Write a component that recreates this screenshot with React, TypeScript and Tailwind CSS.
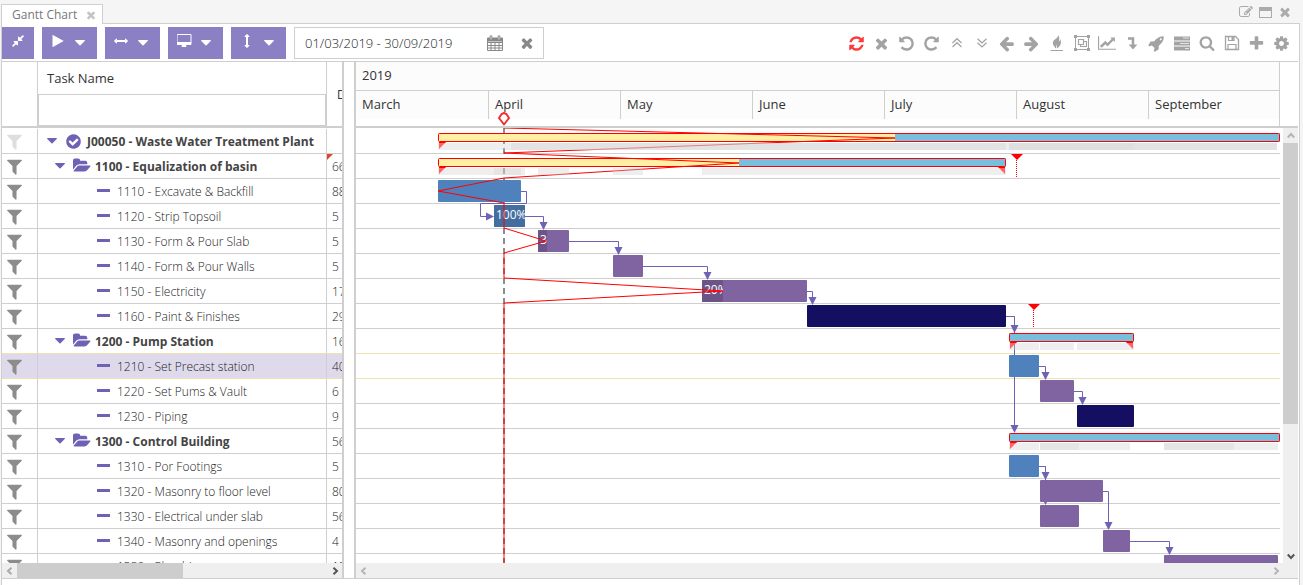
import type { ReactNode } from "react";

type Level = "project" | "group" | "task";

interface Task {
  id: string;
  name: string;
  level: Level;
  duration: string;
  selected?: boolean;
  flagged?: boolean;
}

interface Bar {
  row: number;
  from: number;
  to: number;
  fill: string;
  done?: number;
  doneFill?: string;
  label?: string;
}

interface Summary {
  row: number;
  from: number;
  to: number;
  done?: number;
  open?: boolean;
}

interface Link {
  row: number;
  from: number;
  x: number;
  target: number;
  summary?: boolean;
}

const TASKS: Task[] = [
  { id: "J00050", name: "Waste Water Treatment Plant", level: "project", duration: "" },
  { id: "1100", name: "Equalization of basin", level: "group", duration: "66", flagged: true },
  { id: "1110", name: "Excavate & Backfill", level: "task", duration: "88" },
  { id: "1120", name: "Strip Topsoil", level: "task", duration: "5" },
  { id: "1130", name: "Form & Pour Slab", level: "task", duration: "5" },
  { id: "1140", name: "Form & Pour Walls", level: "task", duration: "5" },
  { id: "1150", name: "Electricity", level: "task", duration: "17" },
  { id: "1160", name: "Paint & Finishes", level: "task", duration: "29" },
  { id: "1200", name: "Pump Station", level: "group", duration: "16" },
  { id: "1210", name: "Set Precast station", level: "task", duration: "40", selected: true },
  { id: "1220", name: "Set Pums & Vault", level: "task", duration: "6" },
  { id: "1230", name: "Piping", level: "task", duration: "9" },
  { id: "1300", name: "Control Building", level: "group", duration: "56" },
  { id: "1310", name: "Por Footings", level: "task", duration: "5" },
  { id: "1320", name: "Masonry to floor level", level: "task", duration: "80" },
  { id: "1330", name: "Electrical under slab", level: "task", duration: "56" },
  { id: "1340", name: "Masonry and openings", level: "task", duration: "4" },
  { id: "1350", name: "Plumbing", level: "task", duration: "15" },
];

const MONTHS = ["March", "April", "May", "June", "July", "August", "September"];

const ROW = 25;
const BLUE = "#4f81bc";
const PURPLE = "#8064a2";
const NAVY = "#150f61";
const LINK = "#6e62b5";

const BARS: Bar[] = [
  { row: 2, from: 82, to: 165, fill: BLUE },
  { row: 3, from: 138, to: 169, fill: BLUE, done: 169, doneFill: "#436e9f", label: "100%" },
  { row: 4, from: 182, to: 213, fill: PURPLE, done: 191, doneFill: "#6c5489", label: "30%" },
  { row: 5, from: 257, to: 287, fill: PURPLE },
  { row: 6, from: 346, to: 451, fill: PURPLE, done: 367, doneFill: "#6c5489", label: "20%" },
  { row: 7, from: 451, to: 650, fill: NAVY },
  { row: 9, from: 653, to: 683, fill: BLUE },
  { row: 10, from: 684, to: 718, fill: PURPLE },
  { row: 11, from: 721, to: 778, fill: NAVY },
  { row: 13, from: 653, to: 683, fill: BLUE },
  { row: 14, from: 684, to: 747, fill: PURPLE },
  { row: 15, from: 684, to: 723, fill: PURPLE },
  { row: 16, from: 747, to: 774, fill: PURPLE },
  { row: 17, from: 808, to: 922, fill: PURPLE },
];

const SUMMARIES: Summary[] = [
  { row: 0, from: 82, to: 924, done: 539, open: true },
  { row: 1, from: 82, to: 650, done: 383 },
  { row: 8, from: 653, to: 778 },
  { row: 12, from: 653, to: 924, open: true },
];

// row, from, to, opacity
const SHADOWS: [number, number, number, number][] = [
  [0, 82, 155, 0.36],
  [0, 155, 650, 0.6],
  [0, 650, 653, 0.36],
  [0, 653, 778, 0.68],
  [0, 778, 921, 0.6],
  [1, 82, 169, 0.36],
  [1, 138, 165, 0.3],
  [1, 182, 213, 0.36],
  [1, 257, 287, 0.36],
  [1, 346, 650, 0.36],
  [8, 653, 683, 0.36],
  [8, 684, 718, 0.36],
  [8, 721, 778, 0.36],
  [12, 653, 683, 0.36],
  [12, 684, 774, 0.36],
  [12, 684, 723, 0.3],
  [12, 808, 922, 0.36],
  [12, 808, 878, 0.3],
];

const LINKS: Link[] = [
  { row: 3, from: 169, x: 187.5, target: 4 },
  { row: 4, from: 213, x: 262.5, target: 5 },
  { row: 5, from: 287, x: 351.5, target: 6 },
  { row: 6, from: 451, x: 456.5, target: 7 },
  { row: 7, from: 650, x: 658.5, target: 8, summary: true },
  { row: 7, from: 650, x: 658.5, target: 12, summary: true },
  { row: 9, from: 683, x: 689.5, target: 10 },
  { row: 10, from: 718, x: 726.5, target: 11 },
  { row: 13, from: 683, x: 689.5, target: 14 },
  { row: 13, from: 683, x: 689.5, target: 15 },
  { row: 14, from: 747, x: 752.5, target: 16 },
  { row: 16, from: 774, x: 813.5, target: 17 },
];

const ICONS = {
  compress:
    "M896 960v448q0 26-19 45t-45 19-45-19l-144-144-332 332q-10 10-23 10t-23-10l-114-114q-10-10-10-23t10-23l332-332-144-144q-19-19-19-45t19-45 45-19h448q26 0 45 19t19 45zm755-672q0 13-10 23l-332 332 144 144q19 19 19 45t-19 45-45 19h-448q-26 0-45-19t-19-45v-448q0-26 19-45t45-19 45 19l144 144 332-332q10-10 23-10t23 10l114 114q10 10 10 23z",
  play: "M1576 927l-1328 738q-23 13-39.500 3t-16.500-36v-1472q0-26 16.500-36t39.500 3l1328 738q23 13 23 31t-23 31z",
  arrowsH:
    "M1792 896q0 26-19 45l-256 256q-19 19-45 19t-45-19-19-45v-128h-1024v128q0 26-19 45t-45 19-45-19l-256-256q-19-19-19-45t19-45l256-256q19-19 45-19t45 19 19 45v128h1024v-128q0-26 19-45t45-19 45 19l256 256q19 19 19 45z",
  desktop:
    "M1728 992v-832q0-13-9.500-22.500t-22.500-9.500h-1600q-13 0-22.500 9.500t-9.500 22.500v832q0 13 9.500 22.500t22.500 9.500h1600q13 0 22.500-9.500t9.500-22.500zm128-832v1088q0 66-47 113t-113 47h-544q0 37 16 77.500t32 71 16 43.500q0 26-19 45t-45 19h-512q-26 0-45-19t-19-45q0-14 16-44t32-70 16-78h-544q-66 0-113-47t-47-113v-1088q0-66 47-113t113-47h1600q66 0 113 47t47 113z",
  refresh:
    "M1639 1056q0 5-1 7-64 268-268 434.500t-478 166.500q-146 0-282.500-55t-243.500-157l-129 129q-19 19-45 19t-45-19-19-45v-448q0-26 19-45t45-19h448q26 0 45 19t19 45-19 45l-137 137q71 66 161 102t187 36q134 0 250-65t186-179q11-17 53-117 8-23 30-23h192q13 0 22.500 9.500t9.500 22.500zm25-800v448q0 26-19 45t-45 19h-448q-26 0-45-19t-19-45 19-45l138-138q-148-137-349-137-134 0-250 65t-186 179q-11 17-53 117-8 23-30 23h-199q-13 0-22.500-9.500t-9.500-22.500v-7q65-268 270-434.500t480-166.500q146 0 284 55.500t245 156.500l130-129q19-19 45-19t45 19 19 45z",
  times:
    "M1490 1322q0 40-28 68l-136 136q-28 28-68 28t-68-28l-294-294-294 294q-28 28-68 28t-68-28l-136-136q-28-28-28-68t28-68l294-294-294-294q-28-28-28-68t28-68l136-136q28-28 68-28t68 28l294 294 294-294q28-28 68-28t68 28l136 136q28 28 28 68t-28 68l-294 294 294 294q28 28 28 68z",
  undo: "M1664 896q0 156-61 298t-164 245-245 164-298 61q-172 0-327-72.500t-264-204.500q-7-10-6.500-22.500t8.500-20.500l137-138q10-9 25-9 16 2 23 12 73 95 179 147t225 52q104 0 198.500-40.500t163.500-109.500 109.500-163.500 40.500-198.500-40.500-198.500-109.500-163.500-163.500-109.500-198.500-40.500q-98 0-188 35.500t-160 101.500l137 138q31 30 14 69-17 40-59 40h-448q-26 0-45-19t-19-45v-448q0-42 40-59 39-17 69 14l130 129q107-101 244.500-156.500t284.500-55.500q156 0 298 61t245 164 164 245 61 298z",
  arrowLeft:
    "M1664 896v128q0 53-32.500 90.500t-84.500 37.500h-704l293 294q38 36 38 90t-38 90l-75 76q-37 37-90 37-52 0-91-37l-651-652q-37-37-37-90 0-52 37-91l651-650q38-38 91-38 52 0 90 38l75 74q38 38 38 91t-38 91l-293 293h704q52 0 84.500 37.500t32.500 90.500z",
  chart:
    "M2048 1536v128h-2048v-1536h128v1408h1920zm-128-1248v435q0 21-19.500 29.500t-35.500-7.500l-121-121-633 633q-10 10-23 10t-23-10l-233-233-416 416-192-192 585-585q10-10 23-10t23 10l233 233 464-464-121-121q-16-16-7.500-35.500t29.500-19.500h435q14 0 23 9t9 23z",
  rocket:
    "M1440 448q0-40-28-68t-68-28-68 28-28 68 28 68 68 28 68-28 28-68zm224-288q0 249-75.500 430.500t-253.500 360.500q-81 80-195 176l-20 379q-2 16-16 26l-384 224q-7 4-16 4-12 0-23-9l-64-64q-13-14-8-32l85-276-281-281-276 85q-3 1-9 1-14 0-23-9l-64-64q-17-19-5-39l224-384q10-14 26-16l379-20q96-114 176-195 188-187 358-258t431-71q14 0 24 9.500t10 22.500z",
  search:
    "M1216 832q0-185-131.500-316.500t-316.500-131.500-316.500 131.500-131.500 316.500 131.500 316.500 316.500 131.500 316.500-131.500 131.500-316.500zm512 832q0 52-38 90t-90 38q-54 0-90-38l-343-342q-179 124-399 124-143 0-273.500-55.500t-225-150-150-225-55.500-273.500 55.500-273.500 150-225 225-150 273.500-55.500 273.500 55.500 225 150 150 225 55.500 273.500q0 220-124 399l343 343q37 37 37 90z",
  plus: "M1600 736v192q0 40-28 68t-68 28h-416v416q0 40-28 68t-68 28h-192q-40 0-68-28t-28-68v-416h-416q-40 0-68-28t-28-68v-192q0-40 28-68t68-28h416v-416q0-40 28-68t68-28h192q40 0 68 28t28 68v416h416q40 0 68 28t28 68z",
  cog: "M1152 896q0-106-75-181t-181-75-181 75-75 181 75 181 181 75 181-75 75-181zm512-109v222q0 12-8 23t-20 13l-185 28q-19 54-39 91 35 50 107 138 10 12 10 25t-9 23q-27 37-99 108t-94 71q-12 0-26-9l-138-108q-44 23-91 38-16 136-29 186-7 28-36 28h-222q-14 0-24.500-8.500t-11.500-21.500l-28-184q-49-16-90-37l-141 107q-10 9-25 9-14 0-25-11-126-114-165-168-7-10-7-23 0-12 8-23 15-21 51-66.500t54-70.500q-27-50-41-99l-183-27q-13-2-21-12.500t-8-23.500v-222q0-12 8-23t19-13l186-28q14-46 39-92-40-57-107-138-10-12-10-24 0-10 9-23 26-36 98.500-107.500t94.500-71.500q13 0 26 10l138 107q44-23 91-38 16-136 29-186 7-28 36-28h222q14 0 24.500 8.500t11.500 21.500l28 184q49 16 90 37l142-107q9-9 24-9 13 0 25 10 129 119 165 170 7 8 7 22 0 12-8 23-15 21-51 66.500t-54 70.500q26 50 41 98l183 28q13 2 21 12.500t8 23.500z",
  filter:
    "M1595 295q17 41-14 70l-493 493v742q0 42-39 59-13 5-25 5-27 0-45-19l-256-256q-19-19-19-45v-486l-493-493q-31-29-14-70 17-39 59-39h1280q42 0 59 39z",
  check:
    "M1412 734q0-28-18-46l-91-90q-19-19-45-19t-45 19l-408 407-226-226q-19-19-45-19t-45 19l-91 90q-18 18-18 46 0 27 18 45l362 362q19 19 45 19 27 0 46-19l543-543q18-18 18-45zm252 162q0 209-103 385.500t-279.500 279.500-385.500 103-385.500-103-279.500-279.500-103-385.500 103-385.500 279.500-279.500 385.500-103 385.500 103 279.500 279.500 103 385.500z",
  folder:
    "M1879 952q0 31-31 66l-336 396q-43 51-120.500 86.500t-143.500 35.500h-1088q-34 0-60.500-13t-26.500-43q0-31 31-66l336-396q43-51 120.500-86.500t143.500-35.500h1088q34 0 60.500 13t26.500 43zm-343-344v160h-832q-94 0-197 47.500t-164 119.500l-337 396-5 6q0-4-.5-12.500t-.5-12.500v-960q0-92 66-158t158-66h320q92 0 158 66t66 158v32h544q92 0 158 66t66 158z",
  edit: "M888 1184l116-116-152-152-116 116v56h96v96h56zm440-720q-16-16-33 1l-350 350q-17 17-1 33t33-1l350-350q17-17 1-33zm80 594v190q0 119-84.500 203.500t-203.500 84.500h-832q-119 0-203.500-84.500t-84.500-203.500v-832q0-119 84.500-203.500t203.500-84.500h832q63 0 117 25 15 7 18 23 3 17-9 29l-49 49q-14 14-32 8-23-6-45-6h-832q-66 0-113 47t-47 113v832q0 66 47 113t113 47h832q66 0 113-47t47-113v-126q0-13 9-22l64-64q15-15 35-7t20 29zm-96-738l288 288-672 672h-288v-288zm444 132l-92 92-288-288 92-92q28-28 68-28t68 28l152 152q28 28 28 68t-28 68z",
};

function Icon({
  name,
  className = "size-4",
  wide = false,
}: {
  name: keyof typeof ICONS;
  className?: string;
  wide?: boolean;
}) {
  return (
    <svg viewBox={wide ? "0 0 2048 1792" : "0 0 1792 1792"} className={className} fill="currentColor" aria-hidden="true">
      <path d={ICONS[name]} />
    </svg>
  );
}

function Caret({ className }: { className: string }) {
  return (
    <svg viewBox="0 0 10 6" className={className} fill="currentColor" aria-hidden="true">
      <path d="M0.600 0H9.400Q10.300 0.300 9.700 1L5.500 5.200Q5 5.600 4.500 5.200L0.300 1Q-0.300 0.300 0.600 0Z" />
    </svg>
  );
}

// 18x18 drawings for the icons that have no solid glyph above
function Draw({ children }: { children: ReactNode }) {
  return (
    <svg viewBox="0 0 18 18" className="size-[18px]" fill="none" stroke="currentColor" aria-hidden="true">
      {children}
    </svg>
  );
}

const TOOLS: { label: string; icon: ReactNode; red?: boolean }[] = [
  { label: "Refresh", icon: <Icon name="refresh" className="size-[17px]" />, red: true },
  { label: "Delete", icon: <Icon name="times" className="size-[17px]" /> },
  { label: "Undo", icon: <Icon name="undo" className="size-[17px]" /> },
  { label: "Redo", icon: <Icon name="undo" className="size-[17px] -scale-x-100" /> },
  {
    label: "Collapse all",
    icon: (
      <Draw>
        <path d="M4.500 9L9 4.700L13.500 9M4.500 13L9 8.700L13.500 13" strokeWidth="1.200" />
      </Draw>
    ),
  },
  {
    label: "Expand all",
    icon: (
      <Draw>
        <path d="M4.500 4.700L9 9L13.500 4.700M4.500 8.700L9 13L13.500 8.700" strokeWidth="1.200" />
      </Draw>
    ),
  },
  { label: "Previous", icon: <Icon name="arrowLeft" className="size-[17px]" /> },
  { label: "Next", icon: <Icon name="arrowLeft" className="size-[17px] -scale-x-100" /> },
  {
    label: "Critical path",
    icon: (
      <Draw>
        <path d="M2.500 16.500H15" />
        <path
          d="M10.300 1C10.800 4 4.800 5.500 4.800 8.800C4.800 11.500 6.800 12.500 7.300 14.200C8.600 14.500 8.200 12 8.700 10.500C9.300 12 9 13.200 8.700 14.500C11.500 13 13 10.500 13 8.500C13 7 12.500 5.800 12.200 5C12 6.500 11.500 7.200 10.700 7.500C11.600 5.200 11.500 3 10.300 1Z"
          fill="currentColor"
          stroke="none"
        />
      </Draw>
    ),
  },
  {
    label: "Group",
    icon: (
      <Draw>
        <path d="M2.500 2.500H15.500V15.500H2.500Z" />
        <path d="M1 1H4V4H1ZM14 1H17V4H14ZM1 14H4V17H1ZM14 14H17V17H14Z" fill="currentColor" stroke="none" />
        <path d="M5.500 5.500H10.500V10.500H5.500ZM11 7.500H13.500V12.500H7.500V11" strokeWidth="1.200" />
      </Draw>
    ),
  },
  { label: "Chart", icon: <Icon name="chart" wide className="h-4 w-[18px]" /> },
  {
    label: "Level down",
    icon: (
      <Draw>
        <path d="M5 4.500H10V11" strokeWidth="2.500" />
        <path d="M5.600 10.500H14.400L10 15.500Z" fill="currentColor" stroke="none" />
      </Draw>
    ),
  },
  { label: "Launch", icon: <Icon name="rocket" className="size-[17px]" /> },
  {
    label: "Rows",
    icon: (
      <Draw>
        <path d="M1 4.500H17M1 9.500H17M1 14.500H17" strokeWidth="4" />
        <path d="M10 4H16M7 9.500H16M12 14.500H16" stroke="#fff" strokeOpacity="0.700" />
      </Draw>
    ),
  },
  { label: "Search", icon: <Icon name="search" className="size-4" /> },
  {
    label: "Save",
    icon: (
      <Draw>
        <path d="M2.500 2.500H12.500L15.500 5.500V15.500H2.500Z" strokeWidth="1.300" />
        <path d="M5.500 2.500V6.500H11V2.500M5 15.500V10.500H13V15.500" strokeWidth="1.200" />
        <path d="M8.500 3H10.500V6H8.500Z" fill="currentColor" stroke="none" />
      </Draw>
    ),
  },
  { label: "Add", icon: <Icon name="plus" className="size-[17px]" /> },
  { label: "Settings", icon: <Icon name="cog" className="size-[17px]" /> },
];

const MENUS: { label: string; icon: ReactNode }[] = [
  { label: "Run", icon: <Icon name="play" className="size-[14px]" /> },
  { label: "Horizontal fit", icon: <Icon name="arrowsH" className="size-[14px]" /> },
  { label: "View", icon: <Icon name="desktop" wide className="h-[14px] w-4" /> },
  { label: "Vertical fit", icon: <Icon name="arrowsH" className="size-[14px] rotate-90" /> },
];

function TabStrip() {
  return (
    <div className="flex h-[23px] items-end justify-between pr-2">
      <div className="relative -mb-px flex h-5 items-center border border-b-0 border-[#cfcfcf] bg-white pr-[5px] pl-[10px] text-[12px] text-[#777]">
        <span>Gantt Chart</span>
        <button aria-label="Close tab" className="ml-2 text-[#c4c4c4]">
          <Icon name="times" className="size-3" />
        </button>
      </div>
      <div className="mb-1 flex items-center gap-1.5 text-[#ababab]">
        <button aria-label="Edit">
          <Icon name="edit" className="size-[14px]" />
        </button>
        <button aria-label="Maximize" className="mt-px h-[11px] w-[13px] border border-t-4 border-[#ababab]" />
        <button aria-label="Close">
          <Icon name="times" className="size-[14px]" />
        </button>
      </div>
    </div>
  );
}

function Toolbar() {
  return (
    <div className="flex items-center justify-between border-b border-[#cfcfcf] pt-[3px] pr-1 pb-0.5">
      <div className="flex gap-2">
        <button aria-label="Compress" className="flex size-8 items-center justify-center bg-[#8b80c4] text-white">
          <Icon name="compress" className="mb-1 size-[14px]" />
        </button>
        {MENUS.map((m) => (
          <button
            key={m.label}
            aria-label={m.label}
            className="flex h-8 w-[55px] items-center justify-between bg-[#8b80c4] pr-3 pl-[9px] text-white"
          >
            <span className="mb-1 flex">{m.icon}</span>
            <Caret className="h-1.5 w-[10px]" />
          </button>
        ))}
        <div className="flex h-8 w-[250px] items-center border border-[#cfcfcf] pr-2 pl-[10px] text-[#888]">
          <input
            aria-label="Date range"
            defaultValue="01/03/2019 - 30/09/2019"
            className="min-w-0 flex-1 pt-0.5 text-[13px] font-light text-[#222] outline-none"
          />
          <button aria-label="Pick dates">
            <svg viewBox="0 0 16 17" className="h-[17px] w-4" fill="none" stroke="currentColor" aria-hidden="true">
              <path d="M0.500 3.500H15.500V15.500H0.500ZM0.500 7.500H15.500M0.500 10.500H15.500M0.500 13H15.500M4 7V16M8 7V16M12 7V16" />
              <path d="M0.500 3H15.500V6H0.500Z" fill="currentColor" />
              <path d="M4 0.500V5M12 0.500V5" strokeWidth="2.500" />
              <path d="M4 1.500V4.500M12 1.500V4.500" stroke="#ddd" />
            </svg>
          </button>
          <button aria-label="Clear dates" className="ml-4">
            <Icon name="times" className="size-4" />
          </button>
        </div>
      </div>
      <div className="flex">
        {TOOLS.map((t) => (
          <button
            key={t.label}
            aria-label={t.label}
            className={`flex h-8 w-[25px] items-center justify-center ${t.red ? "text-[#fa3c3c]" : "text-[#a3a3a3]"}`}
          >
            {t.icon}
          </button>
        ))}
      </div>
    </div>
  );
}

function TaskRow({ task, index }: { task: Task; index: number }) {
  const bold = task.level !== "task";
  const next = TASKS[index + 1];
  const edge = task.selected || next?.selected ? "border-[#f0e2b0]" : "border-[#cfcfcf]";
  return (
    <tr className={`h-[25px] ${task.selected ? "bg-[#dedaec]" : ""}`}>
      <td className={`border-b p-0 ${edge}`}>
        <div className="flex h-6 items-center border-r border-[#cfcfcf] pl-[3px]">
          <button
            aria-label={`Filter ${task.id}`}
            className={task.level === "project" ? "text-[#dedede]" : "text-[#8c8c8c]"}
          >
            <Icon name="filter" className="size-[19px]" />
          </button>
        </div>
      </td>
      <td className={`border-b p-0 ${edge}`}>
        <div className="flex h-6 items-center border-r border-[#cfcfcf] whitespace-nowrap">
          {bold ? (
            <>
              <button
                aria-label={`Toggle ${task.id}`}
                className={task.level === "project" ? "ml-[9px] text-[#6e62b5]" : "ml-[17px] text-[#6e62b5]"}
              >
                <Caret className="h-1.5 w-[10px]" />
              </button>
              {task.level === "project" ? (
                <span className="mr-[5px] ml-2 text-[#6e62b5]">
                  <Icon name="check" className="size-[17px]" />
                </span>
              ) : (
                <span className="mr-[3px] ml-2 pb-0.5 text-[#6e62b5]">
                  <Icon name="folder" wide className="h-[17px] w-[19px]" />
                </span>
              )}
              <span className="pt-0.5 text-[12px] font-bold text-[#444]">
                {task.id} - {task.name}
              </span>
            </>
          ) : (
            <>
              <span className="mb-0.5 ml-[59px] h-[3px] w-[13px] bg-[#6e62b5]" />
              <span className="ml-[7px] pt-0.5 text-[12px] font-light text-[#222]">
                {task.id} - {task.name}
              </span>
            </>
          )}
        </div>
      </td>
      <td className={`relative border-b p-0 pt-0.5 pl-[5px] text-[12px] font-light text-[#222] ${edge}`}>
        {task.flagged && (
          <svg viewBox="0 0 6 6" className="absolute top-0 left-0 size-1.5" aria-hidden="true">
            <path d="M0 0H6L0 6Z" fill="#d9482b" />
          </svg>
        )}
        {task.duration}
      </td>
    </tr>
  );
}

function Chevron({ className }: { className: string }) {
  return (
    <svg viewBox="0 0 8 8" className={`size-2 ${className}`} fill="none" stroke="currentColor" strokeWidth="2" aria-hidden="true">
      <path d="M5.500 0.800L2 4L5.500 7.200" />
    </svg>
  );
}

function TaskGrid() {
  return (
    <div className="flex w-[342px] shrink-0 flex-col overflow-hidden border-r-2 border-[#cfcfcf]">
      <div className="min-h-0 flex-1 overflow-hidden">
        <table className="w-[400px] table-fixed border-separate border-spacing-0 text-left">
          <colgroup>
            <col className="w-9" />
            <col className="w-[289px]" />
            <col />
          </colgroup>
          <thead>
            <tr className="h-[66px]">
              <th className="border-r border-b-2 border-[#cfcfcf] p-0" aria-label="Filter" />
              <th className="border-r border-b-2 border-[#cfcfcf] p-0 align-top font-normal">
                <label htmlFor="task-filter" className="block h-8 pl-[9px] text-[13px] leading-8 text-[#333]">
                  Task Name
                </label>
                <input
                  id="task-filter"
                  className="block h-8 w-full border border-[#cfcfcf] px-2 text-[13px] outline-none"
                />
              </th>
              <th className="border-b-2 border-[#cfcfcf] p-0 pt-0.5 pl-[10px] text-[12px] font-normal text-[#333]">
                Duration
              </th>
            </tr>
          </thead>
          <tbody className="before:block before:h-px before:content-['']">
            {TASKS.map((t, i) => (
              <TaskRow key={t.id} task={t} index={i} />
            ))}
          </tbody>
        </table>
      </div>
      <div className="flex h-[15px] shrink-0 items-center bg-[#efefef]">
        <span className="flex w-[15px] justify-center text-[#aaa]">
          <Chevron className="" />
        </span>
        <span className="h-full w-[166px] bg-[#cdcdcd]" />
        <span className="ml-auto flex w-[15px] justify-center text-[#555]">
          <Chevron className="rotate-180" />
        </span>
      </div>
    </div>
  );
}

function Deadline({ x, row }: { x: number; row: number }) {
  const y = row * ROW + 1;
  return (
    <g>
      <path d={`M${x - 6} ${y}H${x + 6}L${x} ${y + 6}Z`} fill="#f00" />
      <path d={`M${x - 0.5} ${y + 6}V${y + 23}`} stroke="#f00" strokeDasharray="1 1" />
    </g>
  );
}

function GanttCanvas() {
  return (
    <svg width="924" height="451" className="absolute top-0 left-0" aria-label="Gantt bars" role="img">
      <path d="M148 0V451" stroke="#8c8c8c" strokeWidth="2" strokeDasharray="6 4" />

      <g fill="none" stroke={LINK}>
        <path d="M165 63.500H170.500V75.500H124.500V88.500H131" />
        {LINKS.map((l, i) => (
          <path key={i} d={`M${l.from} ${l.row * ROW + 13.5}H${l.x}V${l.target * ROW + (l.summary ? 2 : 0)}`} />
        ))}
      </g>
      <g fill={LINK}>
        <path d="M130 84.500L138 88.500L130 92.500Z" />
        {LINKS.map((l, i) => {
          const tip = l.target * ROW + (l.summary ? 5 : 2);
          return <path key={i} d={`M${l.x - 4} ${tip - 8}H${l.x + 4}L${l.x} ${tip}Z`} />;
        })}
      </g>

      {SUMMARIES.map((s) => {
        const y = s.row * ROW + 5;
        return (
          <g key={s.row}>
            <rect x={s.from} y={y} width={s.to - s.from} height="9" rx="1" fill="#77bfdc" />
            {s.done && <rect x={s.from} y={y} width={s.done - s.from} height="9" fill="#fff0a3" />}
            <rect x={s.from + 0.5} y={y + 0.5} width={s.to - s.from - 1} height="8" rx="1" fill="none" stroke="#f00" />
          </g>
        );
      })}

      {BARS.map((b) => {
        const y = b.row * ROW + 2;
        return (
          <g key={b.row}>
            <rect x={b.from} y={y} width={b.to - b.from} height="22" rx="1" fill={b.fill} />
            {b.done && (
              <>
                <rect x={b.from} y={y} width={b.done - b.from} height="22" rx="1" fill={b.doneFill} />
                <svg x={b.from} y={y} width={b.done - b.from} height="22" overflow="hidden">
                  <text x="2" y="14" fill="#fff" fontSize="12">
                    {b.label}
                  </text>
                </svg>
              </>
            )}
          </g>
        );
      })}

      <path
        d="M148 0L539 10L148 25L383 35L148 50L82 63L148 75V100L190 113L148 125V150L367 163L148 175V451"
        fill="none"
        stroke="#f00"
      />

      {SHADOWS.map(([row, from, to, opacity], i) => (
        <rect key={i} x={from} y={row * ROW + 15} width={to - from} height="7" fill="#d0d0d0" opacity={opacity} />
      ))}
      {SUMMARIES.map((s) => {
        const y = s.row * ROW + 14;
        return (
          <g key={s.row} fill="#ff6464">
            <path d={`M${s.from + 1} ${y}h7l-7 7z`} />
            <path d={`M${s.from + 1} ${y}h7l-1 1h-6z`} fill="#f00" />
            {!s.open && (
              <>
                <path d={`M${s.to - 1} ${y}h-7l7 7z`} />
                <path d={`M${s.to - 1} ${y}h-7l1 1h6z`} fill="#f00" />
              </>
            )}
          </g>
        );
      })}
      <Deadline x={661} row={1} />
      <Deadline x={678} row={7} />
    </svg>
  );
}

function Timeline() {
  return (
    <div className="flex min-w-0 flex-1 flex-col border-l-2 border-[#cfcfcf]">
      <div className="relative h-[66px] shrink-0 border-b-2 border-[#cfcfcf] text-[13px] text-[#333]">
        <div className="h-full w-[924px] border-r border-[#cfcfcf]">
          <div className="h-[29px] border-b border-[#cfcfcf] bg-[#fcfcfc] pl-1.5 leading-[27px]">2019</div>
          <div className="flex h-7 bg-[#fcfcfc]">
            {MONTHS.map((m) => (
              <div key={m} className="w-[132px] shrink-0 border-l border-[#cfcfcf] pl-1.5 leading-[27px] first:border-l-0 last:w-[131px]">
                {m}
              </div>
            ))}
          </div>
        </div>
        {/* today marker */}
        <svg viewBox="0 0 12 14" className="absolute bottom-0 left-[142px] h-[14px] w-3" aria-hidden="true">
          <path
            d="M6 1L8.500 2.200L11 6L6 12.500L1 6L3.500 2.200Z"
            fill="#fff"
            stroke="#f03030"
            strokeWidth="2"
            strokeLinejoin="round"
          />
        </svg>
      </div>
      <div className="flex min-h-0 flex-1">
        <div className="relative min-w-0 flex-1 overflow-hidden">
          <div className="w-[924px] pt-px">
            {TASKS.map((t, i) => (
              <div
                key={t.id}
                className={`h-[25px] border-b ${
                  t.selected || TASKS[i + 1]?.selected ? "border-[#f0e2b0]" : "border-[#cfcfcf]"
                }`}
              />
            ))}
          </div>
          <GanttCanvas />
        </div>
        <div className="flex w-[15px] shrink-0 flex-col items-center bg-[#efefef]">
          <span className="flex h-[15px] items-center text-[#b5b5b5]">
            <Chevron className="rotate-90" />
          </span>
          <span className="h-[281px] w-full bg-[#cdcdcd]" />
          <span className="mt-auto flex h-[15px] items-center text-[#555]">
            <Chevron className="-rotate-90" />
          </span>
        </div>
      </div>
      <div className="flex h-[15px] shrink-0 items-center justify-between bg-[#efefef] pr-[18px] pl-1 text-[#b5b5b5]">
        <Chevron className="" />
        <Chevron className="rotate-180" />
      </div>
    </div>
  );
}

export default function App() {
  return (
    <div className="flex h-screen flex-col overflow-hidden bg-[#f5f5f5] pr-[3px] pl-px font-['Open_Sans',sans-serif]">
      <TabStrip />
      <div className="flex min-h-0 flex-1 flex-col border border-b-0 border-[#cfcfcf] bg-white pr-px pb-1.5">
        <Toolbar />
        <div className="flex min-h-0 flex-1 border-b border-[#cfcfcf]">
          <TaskGrid />
          <div className="w-[10px] shrink-0" />
          <Timeline />
        </div>
      </div>
    </div>
  );
}
